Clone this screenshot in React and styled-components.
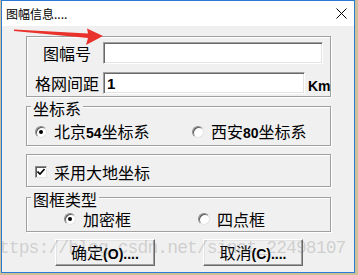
import React, { useState } from 'react';
import styled, { createGlobalStyle } from 'styled-components';

const GlobalStyle = createGlobalStyle`
  html, body {
    margin: 0;
    padding: 0;
  }
  body {
    background: #cdbf9a;
    font-family: "Noto Sans CJK SC", "Noto Sans", sans-serif;
    color: #000;
  }
`;

const Page = styled.div`
  position: relative;
  width: 358px;
  height: 275px;
  overflow: hidden;
  background: #cdbf9a;
`;

const Window = styled.div`
  margin-left: 1px;
  width: 354px;
  height: 273px;
  box-sizing: border-box;
  border: 1px solid #2b7bd4;
  background: #f0f0f0;
  display: flex;
  flex-direction: column;
`;

const TitleBar = styled.div`
  height: 25px;
  flex-shrink: 0;
  background: #fff;
  display: flex;
  align-items: center;
  justify-content: space-between;
  padding: 0 7px 0 4px;
  font-size: 12px;
`;

const Body = styled.div`
  flex: 1;
  padding: 10px 0 0 24px;
  display: flex;
  flex-direction: column;
  align-items: flex-start;
`;

const Group = styled.div`
  width: 305px;
  box-sizing: border-box;
  margin-top: ${p => p.$mt || 0}px;
  padding: ${p => p.$pad || '0'};
  border: 1px solid #a0a0a0;
  box-shadow: inset 1px 1px #fff, 1px 1px #fff;
`;

const Legend = styled.div`
  display: table;
  margin: -8px 0 0 4px;
  padding: 0 2px;
  background: #f0f0f0;
  font-size: 16px;
  line-height: 18px;
`;

const FieldGrid = styled.div`
  display: grid;
  grid-template-columns: 72px auto;
  row-gap: 8px;
  align-items: center;
`;

const Label = styled.div`
  text-align: center;
  font-size: 16px;
  line-height: 20px;
`;

const Field = styled.div`
  display: flex;
  align-items: center;
  gap: 3px;
`;

const TextBox = styled.input`
  width: ${p => p.$w}px;
  height: 22px;
  box-sizing: border-box;
  margin: 0;
  padding: 0 3px;
  border: 1px solid;
  border-color: #a0a0a0 #fff #fff #a0a0a0;
  box-shadow: inset 1px 1px #696969, inset -1px -1px #e3e3e3;
  background: #fff;
  font-family: "Liberation Sans", Arial, sans-serif;
  font-weight: bold;
  font-size: 15px;
  outline: none;
`;

const Unit = styled.span`
  font-family: "Liberation Sans", Arial, sans-serif;
  font-weight: bold;
  font-size: 14px;
  padding-top: 6px;
`;

const OptionRow = styled.div`
  display: grid;
  grid-template-columns: ${p => p.$col}px auto;
  padding-left: ${p => p.$left}px;
  margin-top: ${p => p.$mt || 0}px;
`;

const Option = styled.label`
  display: flex;
  align-items: center;
  gap: 7px;
  font-size: 16px;
  line-height: 20px;
  cursor: default;
`;

const RadioMark = styled.span`
  width: 12px;
  height: 12px;
  box-sizing: border-box;
  border-radius: 50%;
  border: 1px solid;
  border-color: #8a8a8a #e3e3e3 #e3e3e3 #8a8a8a;
  box-shadow: inset 1px 1px #5a5a5a;
  background: #fff;
  display: flex;
  align-items: center;
  justify-content: center;

  &::after {
    content: '';
    width: 4px;
    height: 4px;
    border-radius: 50%;
    background: ${p => (p.$on ? '#000' : 'transparent')};
  }
`;

const CheckMark = styled.span`
  width: 12px;
  height: 12px;
  box-sizing: border-box;
  border: 1px solid;
  border-color: #8a8a8a #e3e3e3 #e3e3e3 #8a8a8a;
  box-shadow: inset 1px 1px #5a5a5a;
  background: #fff;
  display: flex;
  align-items: center;
  justify-content: center;
`;

const Num = styled.b`
  font-family: "Liberation Sans", Arial, sans-serif;
  font-size: 14px;
`;

const ButtonRow = styled.div`
  display: flex;
  gap: 48px;
  margin: 7px 0 0 29px;
`;

const Button = styled.button`
  width: 100px;
  height: 27px;
  box-sizing: border-box;
  padding: 0;
  border: 1px solid;
  border-color: #fff #696969 #696969 #fff;
  box-shadow: inset -1px -1px #a0a0a0, inset 1px 1px #e3e3e3;
  background: #f0f0f0;
  font-family: "Noto Sans CJK SC", sans-serif;
  font-size: 16px;
  line-height: 20px;
  color: #000;
`;

const Overlay = styled.svg`
  position: absolute;
  left: 0;
  top: 0;
  pointer-events: none;
`;

const Watermark = styled.div`
  position: absolute;
  left: -11px;
  top: 238px;
  font-family: "Liberation Mono", monospace;
  font-size: 18px;
  letter-spacing: -0.9px;
  white-space: nowrap;
  color: rgba(110, 110, 110, 0.26);
  pointer-events: none;
`;

function Radio({ on, onClick, children }) {
  return (
    <Option onClick={onClick}>
      <RadioMark $on={on} />
      <span>{children}</span>
    </Option>
  );
}

export default function App() {
  const [coord, setCoord] = useState(54);
  const [frame, setFrame] = useState('dense');
  const [geo, setGeo] = useState(true);

  return (
    <Page>
      <GlobalStyle />
      <Window>
        <TitleBar>
          <span>图幅信息....</span>
          <svg width="11" height="11" viewBox="0 0 11 11">
            <path d="M0.5 0.5 L10.5 10.5 M10.5 0.5 L0.5 10.5" stroke="#000" strokeWidth="1" />
          </svg>
        </TitleBar>
        <Body>
          <Group $pad="5px 0 2px 4px">
            <FieldGrid>
              <Label>图幅号</Label>
              <Field>
                <TextBox $w={220} defaultValue="" />
              </Field>
              <Label>格网间距</Label>
              <Field>
                <TextBox $w={202} defaultValue="1" />
                <Unit>Km</Unit>
              </Field>
            </FieldGrid>
          </Group>

          <Group $mt={9} $pad="0 0 2px 0">
            <Legend>坐标系</Legend>
            <OptionRow $col={157} $left={8} $mt={4}>
              <Radio on={coord === 54} onClick={() => setCoord(54)}>
                北京<Num>54</Num>坐标系
              </Radio>
              <Radio on={coord === 80} onClick={() => setCoord(80)}>
                西安<Num>80</Num>坐标系
              </Radio>
            </OptionRow>
          </Group>

          <Group $mt={8} $pad="7px 0 4px 8px">
            <Option onClick={() => setGeo(!geo)}>
              <CheckMark>
                {geo && (
                  <svg width="8" height="8" viewBox="0 0 8 8">
                    <path d="M0.5 3.5 L3 6 L7.5 1" fill="none" stroke="#000" strokeWidth="1.6" />
                  </svg>
                )}
              </CheckMark>
              <span>采用大地坐标</span>
            </Option>
          </Group>

          <Group $mt={10} $pad="0 0 2px 0">
            <Legend>图框类型</Legend>
            <OptionRow $col={134} $left={37} $mt={1}>
              <Radio on={frame === 'dense'} onClick={() => setFrame('dense')}>
                加密框
              </Radio>
              <Radio on={frame === 'four'} onClick={() => setFrame('four')}>
                四点框
              </Radio>
            </OptionRow>
          </Group>

          <ButtonRow>
            <Button>确定<Num>(O)....</Num></Button>
            <Button>取消<Num>(C)....</Num></Button>
          </ButtonRow>
        </Body>
      </Window>

      <Overlay width="358" height="275" viewBox="0 0 358 275">
        <polygon
          points="14,29.5 88,33.5 87,28.5 103,36 86,45 88,38 14,31"
          fill="#e8322b"
        />
      </Overlay>
      <Watermark>https://blog.csdn.net/sinat_22498107</Watermark>
    </Page>
  );
}
